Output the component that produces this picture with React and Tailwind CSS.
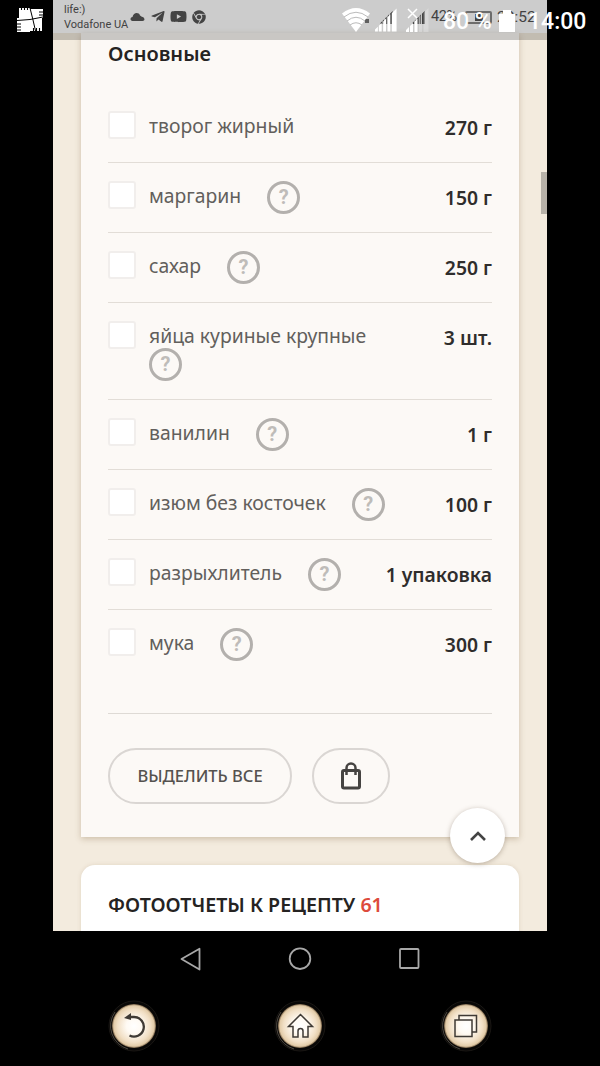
import { FaTelegramPlane, FaYoutube, FaChrome } from "react-icons/fa";

const INGREDIENTS = [
  { name: "творог жирный", amount: "270 г" },
  { name: "маргарин", amount: "150 г", hint: true },
  { name: "сахар", amount: "250 г", hint: true },
  { name: "яйца куриные крупные", amount: "3 шт.", hint: true, wrap: true },
  { name: "ванилин", amount: "1 г", hint: true },
  { name: "изюм без косточек", amount: "100 г", hint: true },
  { name: "разрыхлитель", amount: "1 упаковка", hint: true },
  { name: "мука", amount: "300 г", hint: true },
];

function Hint() {
  return (
    <span className="flex h-[33px] w-[33px] shrink-0 items-center justify-center rounded-full border-3 border-[#b3b0ad] pb-px font-['Roboto',sans-serif] text-[20px] leading-none font-bold text-[#bfbcb9]">
      ?
    </span>
  );
}

function Ingredient({ item, last }) {
  return (
    <li
      className={`flex items-start pt-[18px] ${item.wrap ? "h-[97px]" : "h-[70px]"} ${
        last ? "" : "border-b border-[#e2ddd7]"
      }`}
    >
      <span className="h-7 w-7 shrink-0 rounded-[3px] border-2 border-[#f1eeec] bg-white" />
      <div className={`ml-[13px] flex flex-1 ${item.wrap ? "flex-col" : "gap-[26px]"}`}>
        <span className="h-[27px] text-[19.35px] leading-[29px] whitespace-nowrap text-[#625f5c]">
          {item.name}
        </span>
        {item.hint && <Hint />}
      </div>
      <span className="pt-[2px] text-[19.35px] leading-[29px] font-semibold whitespace-nowrap text-[#2f2d2c]">
        {item.amount}
      </span>
    </li>
  );
}

function Signal({ className }) {
  return (
    <svg viewBox="0 0 24 24" className={className} fill="currentColor">
      <path d="M0 24v-2l3-3v5zM4 24v-6l3-3v9zM8.500 24V13.500l3-3V24zM13 24V9l3-3v18zM17.500 24V5l5-5v24z" />
    </svg>
  );
}

function InnerStatusBar() {
  return (
    <div className="flex h-[33px] shrink-0 items-start bg-white pl-[11px] font-['Roboto',sans-serif] text-[#535353]">
      <div className="pt-[2px] text-[11px] leading-[15px] whitespace-nowrap">
        <div>life:)</div>
        <div>Vodafone UA</div>
      </div>
      <div className="mt-[9px] ml-[2px] flex items-center text-[#555]">
        <svg viewBox="0 0 15 9" className="h-[9px] w-[15px]" fill="currentColor">
          <path d="M2.500 9C0 9-.300 5.500 2.500 5 3.500 0 9 .200 10 3.500c.700.300 1 .600 1.300 1C15 5 15.500 9 12.500 9z" />
        </svg>
        <FaTelegramPlane className="ml-[5px] h-[15px] w-[16px]" />
        <FaYoutube className="ml-[4px] h-[15px] w-[17px]" />
        <FaChrome className="ml-[5px] h-[14px] w-[14px]" />
      </div>
      <div className="mt-[8px] mr-[11px] ml-auto flex items-center text-[14.5px] leading-[18px]">
        <span className="mt-[7px] mr-[11px] h-[4px] w-[4px] bg-[#777]" />
        <Signal className="h-[13px] w-[14px]" />
        <Signal className="mr-[5px] ml-[18px] h-[13px] w-[14px]" />
        <span className="w-[28px] tracking-tight">42%</span>
        <span className="mr-[5px] ml-[6px] flex h-[13px] w-[27px] items-center justify-center rounded-xs border-2 border-[#888]">
          <span className="h-[7px] w-[8px] bg-[#555]" />
        </span>
        <span className="w-[39px] text-[15.5px]">20:52</span>
      </div>
    </div>
  );
}

function OuterStatusBar() {
  return (
    <div className="absolute inset-x-0 top-0 flex h-10 items-start bg-black/20 font-['Roboto',sans-serif] text-white">
      <svg viewBox="0 0 28 28" className="mt-[6px] ml-[16px] h-[28px] w-[28px]">
        <path
          d="M3 1v11H1v14h13v-1h12V12h1V3H14V2H3z"
          fill="white"
        />
        <path
          d="M14 2l3 12 3 13M1 14.500l13-1 13-2.500"
          stroke="black"
          fill="none"
          strokeWidth="1"
        />
        <path
          d="M5.500 0v4M8.500 0v4M11.500 0v4M23 6h5M23 9h5M0 18h5M0 21h5M0 24h5M17.500 22v5M20.500 22v5M23.500 22v5"
          stroke="black"
          fill="none"
          strokeWidth="1.100"
        />
      </svg>
      <svg viewBox="0 0 28 24" className="mt-[8px] ml-[298px] h-[24px] w-[28px]">
        <path d="M0 5.500Q14-5.500 28 5.500L14 24z" fill="white" />
        <path
          d="M2 9Q14-.500 26 9M5 13Q14 5.500 23 13M8 17Q14 12.500 20 17"
          stroke="#bbb"
          fill="none"
          strokeWidth="1"
        />
      </svg>
      <Signal className="mt-[8px] ml-[5px] h-[24px] w-[23px]" />
      <svg viewBox="0 0 24 24" className="mt-[8px] ml-[8px] h-[24px] w-[24px]" fill="white">
        <path d="M0 24v-2l3-3v5zM4 24v-6l3-3v9zM8.500 24V13.500l3-3V24z" />
        <path d="M13 24V9l3-3v18zM17.500 24V5l5-5v24z" opacity=".25" />
        <path d="M2 1l9 9M11 1l-9 9" stroke="white" strokeWidth="1.500" />
      </svg>
      <span className="mt-[8px] ml-[13px] w-[52px] text-[23px] leading-[27px] font-medium whitespace-nowrap">
        80 %
      </span>
      <svg viewBox="0 0 16 24" className="mt-[8px] ml-[4px] h-[24px] w-[16px]" fill="white">
        <path d="M4 2h8v4h4v18H0V6h4z" />
      </svg>
      <span className="mt-[8px] ml-[13px] text-[23px] leading-[27px] font-medium whitespace-nowrap">
        14:00
      </span>
    </div>
  );
}

function Actions() {
  return (
    <div className="flex gap-5 pt-[34px]">
      <button className="h-[56px] w-[184px] rounded-full border-2 border-[#dad6d3] text-[16.5px] font-medium whitespace-nowrap text-[#55524f]">
        ВЫДЕЛИТЬ ВСЕ
      </button>
      <button className="flex h-[56px] w-[78px] items-center justify-center rounded-full border-2 border-[#dad6d3]">
        <svg viewBox="0 0 22 28" className="h-[28px] w-[22px]" fill="none" stroke="#454341">
          <rect x="2.500" y="8.500" width="17" height="17.500" rx="1.500" strokeWidth="3" />
          <path d="M6.500 13V6a4.500 4.500 0 0 1 9 0v7" strokeWidth="2.500" />
        </svg>
      </button>
    </div>
  );
}

function ScreenNav() {
  return (
    <div className="flex h-[56px] items-center justify-center gap-[84px]">
      <svg viewBox="0 0 26 26" className="h-[26px] w-[26px]" fill="none" stroke="#a8a8a8" strokeWidth="1.800">
        <path d="M4.500 13L22.500 2.800v20.700z" strokeLinejoin="round" />
      </svg>
      <svg viewBox="0 0 26 26" className="h-[26px] w-[26px]" fill="none" stroke="#a8a8a8" strokeWidth="1.800">
        <circle cx="13" cy="12.700" r="10.300" />
      </svg>
      <svg viewBox="0 0 26 26" className="h-[26px] w-[26px]" fill="none" stroke="#a8a8a8" strokeWidth="1.800">
        <rect x="3" y="3" width="18.500" height="19" rx="1" />
      </svg>
    </div>
  );
}

function Orb({ children }) {
  return (
    <svg viewBox="0 0 52 52" className="h-[52px] w-[52px]">
      <defs>
        <radialGradient id="orb">
          <stop offset="0" stopColor="#fff" />
          <stop offset=".35" stopColor="#fffaf3" />
          <stop offset=".75" stopColor="#f1dfc5" />
          <stop offset=".92" stopColor="#e2cba8" />
          <stop offset="1" stopColor="#725c42" />
        </radialGradient>
      </defs>
      <circle cx="26" cy="26" r="25" fill="#080706" stroke="#1a1714" strokeWidth="1" />
      <path d="M7 12A24 24 0 0 0 20 49" fill="none" stroke="#5f5951" strokeWidth=".8" />
      <circle cx="26" cy="26" r="22" fill="url(#orb)" />
      <g fill="none" stroke="#3f3a35" strokeWidth="1.500">
        {children}
      </g>
    </svg>
  );
}

function SystemNav() {
  return (
    <div className="flex h-[77px] items-center justify-center gap-[114px]">
      <Orb>
        <path d="M22 17h4a9.800 9.800 0 1 1-4.500 18.500" strokeWidth="2.300" />
        <path d="M16 18l7-5v7z" fill="#3f3a35" stroke="none" />
      </Orb>
      <Orb>
        <path d="M26.500 14.500L14.500 26.500h4.500v10.500h5v-6q0-2.500 2.500-2.500t2.500 2.500v6h5V26.500h4.500z" />
      </Orb>
      <Orb>
        <path d="M19 20v-4.500h17.500v16.500H32" />
        <rect x="15" y="20" width="17" height="16.500" />
      </Orb>
    </div>
  );
}

export default function App() {
  return (
    <div className="relative h-[1066px] w-[600px] overflow-hidden bg-black font-['Noto_Sans','Open_Sans',sans-serif]">
      <main className="relative mx-auto flex h-[931px] w-[494px] flex-col overflow-hidden bg-[#f3ebde]">
        <InnerStatusBar />

        {/* Ingredients */}
        <section className="mx-7 h-[804px] shrink-0 bg-[#fcf9f6] px-[27px] shadow-[0_2px_6px_rgba(120,90,50,0.3)]">
          <h2 className="h-[60px] pt-[6px] text-[20px] leading-[30px] font-semibold text-[#252322]">
            Основные
          </h2>
          <ul className="h-[621px] border-b border-[#dedad5]">
            {INGREDIENTS.map((item, i) => (
              <Ingredient key={item.name} item={item} last={i === INGREDIENTS.length - 1} />
            ))}
          </ul>
          <Actions />
        </section>

        {/* Photo reports */}
        <section className="mx-7 mt-7 h-[90px] shrink-0 rounded-t-[14px] bg-white px-[27px] pt-[25px] shadow-[0_0_4px_rgba(120,90,50,0.15)]">
          <h2 className="text-[19.600px] leading-[30px] font-semibold whitespace-nowrap text-[#252322]">
            ФОТООТЧЕТЫ К РЕЦЕПТУ <span className="text-[#dd4b3c]">61</span>
          </h2>
        </section>

        {/* Scroll to top */}
        <button className="absolute top-[808px] right-[42px] flex h-[55px] w-[55px] items-center justify-center rounded-full bg-white shadow-[0_1px_5px_rgba(80,60,40,0.35)]">
          <svg viewBox="0 0 16 10" className="h-[10px] w-[16px]" fill="none" stroke="#444" strokeWidth="2.600">
            <path d="M1 9l7-7 7 7" />
          </svg>
        </button>

        {/* Scrollbar */}
        <div className="absolute top-[172px] right-0 h-[42px] w-[6px] bg-[#b8b2a9]" />
      </main>

      <ScreenNav />
      <SystemNav />
      <OuterStatusBar />
    </div>
  );
}
